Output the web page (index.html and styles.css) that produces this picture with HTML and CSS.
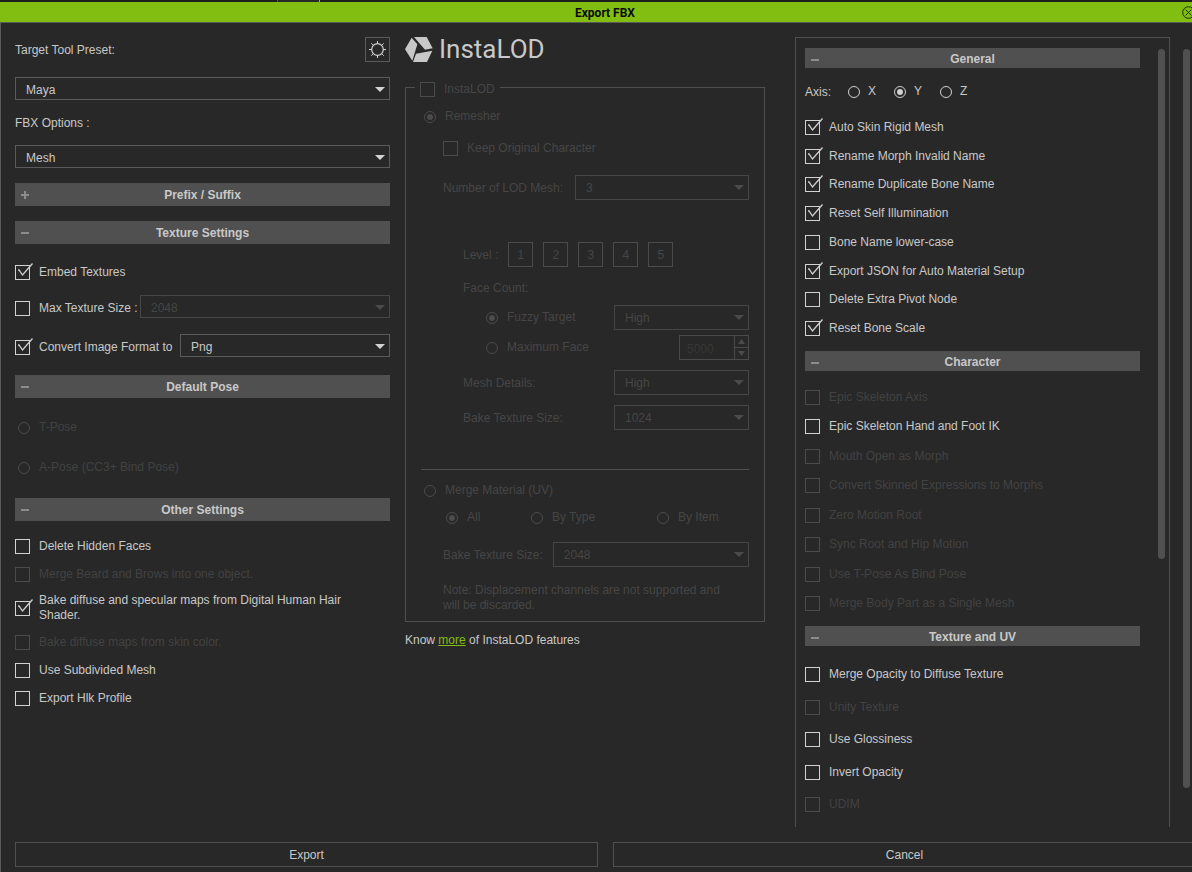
FILE: index.html
```html
<!DOCTYPE html>
<html lang="en">
<head>
<meta charset="utf-8">
<title>Export FBX</title>
<link rel="stylesheet" href="styles.css">
</head>
<body>
<div class="backdrop"><span class="backdrop-tab"></span></div>
<header class="titlebar">
  <h1 class="title">Export FBX</h1>
  <button class="close" aria-label="Close">
    <svg width="13" height="13" viewBox="0 0 13 13" fill="none" stroke="#1c2a04"><circle cx="6.5" cy="6.5" r="5.8"/><path d="M3.6 3.6l5.8 5.8M9.400 3.600l-5.800 5.800"/></svg>
  </button>
</header>

<form class="dialog">
  <div class="main">
    <section class="col-left">
      <div class="preset-row">
        <label for="preset">Target Tool Preset:</label>
        <button type="button" class="icon-btn" aria-label="Preset settings">
          <svg width="19" height="19" viewBox="0 0 19 19" fill="none" stroke="#d2d2d2"><circle cx="9.500" cy="9.500" r="5.800" stroke-width="1.200"/><path d="M9.500 1v2.700M9.500 15.300V18M1 9.500h2.700M15.300 9.500H18M3.300 3.300l2.200 2.200M13.500 13.500l2.200 2.200M3.300 15.700l2.200-2.200M13.500 5.500l2.200-2.200"/></svg>
        </button>
      </div>
      <select id="preset" class="select"><option>Maya</option></select>
      <label for="fbx" class="fbx-label">FBX Options :</label>
      <select id="fbx" class="select"><option>Mesh</option></select>

      <button type="button" class="bar"><svg class="bar-icon" width="8" height="10" viewBox="0 0 8 10"><path d="M0 4h8v2H0zM3 1h2v8H3z" fill="#8c8c8c"/></svg><span>Prefix / Suffix</span></button>
      <button type="button" class="bar"><svg class="bar-icon" width="8" height="10" viewBox="0 0 8 10"><path d="M0 4h8v2H0z" fill="#8c8c8c"/></svg><span>Texture Settings</span></button>
      <div class="texture-list">
        <label class="opt"><input type="checkbox" class="check" checked><span>Embed Textures</span></label>
        <div class="field-row max-size">
          <label class="opt"><input type="checkbox" class="check"><span>Max Texture Size :</span></label>
          <select class="select" aria-label="Max texture size" disabled><option>2048</option></select>
        </div>
        <div class="field-row convert">
          <label class="opt"><input type="checkbox" class="check" checked><span>Convert Image Format to</span></label>
          <select class="select" aria-label="Image format"><option>Png</option></select>
        </div>
      </div>

      <button type="button" class="bar"><svg class="bar-icon" width="8" height="10" viewBox="0 0 8 10"><path d="M0 4h8v2H0z" fill="#8c8c8c"/></svg><span>Default Pose</span></button>
      <div class="pose-list">
        <label class="opt off"><input type="radio" class="radio" name="pose" disabled><span>T-Pose</span></label>
        <label class="opt off"><input type="radio" class="radio" name="pose" disabled><span>A-Pose (CC3+ Bind Pose)</span></label>
      </div>

      <button type="button" class="bar"><svg class="bar-icon" width="8" height="10" viewBox="0 0 8 10"><path d="M0 4h8v2H0z" fill="#8c8c8c"/></svg><span>Other Settings</span></button>
      <div class="other-list">
        <label class="opt"><input type="checkbox" class="check"><span>Delete Hidden Faces</span></label>
        <label class="opt off"><input type="checkbox" class="check" disabled><span>Merge Beard and Brows into one object.</span></label>
        <label class="opt opt-tall"><input type="checkbox" class="check" checked><span>Bake diffuse and specular maps from Digital Human Hair Shader.</span></label>
        <label class="opt off"><input type="checkbox" class="check" disabled><span>Bake diffuse maps from skin color.</span></label>
        <label class="opt"><input type="checkbox" class="check"><span>Use Subdivided Mesh</span></label>
        <label class="opt"><input type="checkbox" class="check"><span>Export Hlk Profile</span></label>
      </div>
    </section>

    <section class="col-mid">
      <div class="logo">
        <svg width="28" height="25" viewBox="0 0 84 75" fill="#c8c8c8"><path d="M27 0H65L83 34 60 38z"/><path d="M82 41L66 75H24L33 50z"/><path d="M20 2L37 22 22 71 0 37z"/></svg>
        <span>InstaLOD</span>
      </div>
      <fieldset class="lod">
        <legend class="lod-legend"><label class="opt"><input type="checkbox" class="check" disabled><span>InstaLOD</span></label></legend>
        <label class="opt"><input type="radio" class="radio" name="mode" checked disabled><span>Remesher</span></label>
        <div class="group">
          <label class="opt keep"><input type="checkbox" class="check" disabled><span>Keep Original Character</span></label>
          <div class="field-row lod-count">
            <label class="caption" for="lods">Number of LOD Mesh:</label>
            <select id="lods" class="select tall" disabled><option>3</option></select>
          </div>
          <div class="levels">
            <div class="level-row">
              <span class="caption">Level :</span>
              <button type="button" class="level" disabled>1</button>
              <button type="button" class="level" disabled>2</button>
              <button type="button" class="level" disabled>3</button>
              <button type="button" class="level" disabled>4</button>
              <button type="button" class="level" disabled>5</button>
            </div>
            <p class="face-title">Face Count:</p>
            <div class="split face">
              <label class="opt"><input type="radio" class="radio" name="face" checked disabled><span>Fuzzy Target</span></label>
              <select class="select tall medium" aria-label="Fuzzy target" disabled><option>High</option></select>
            </div>
            <div class="split face max-face">
              <label class="opt"><input type="radio" class="radio" name="face" disabled><span>Maximum Face</span></label>
              <div class="spin">
                <input type="text" value="5000" aria-label="Maximum face" disabled>
                <div class="spin-btns">
                  <button type="button" aria-label="Increase" disabled><svg width="7" height="5" viewBox="0 0 7 5"><path d="M3.500 0L7 5H0z" fill="#4b4b4b"/></svg></button>
                  <button type="button" aria-label="Decrease" disabled><svg width="7" height="5" viewBox="0 0 7 5"><path d="M3.500 5L7 0H0z" fill="#4b4b4b"/></svg></button>
                </div>
              </div>
            </div>
            <div class="split detail">
              <label class="caption" for="details">Mesh Details:</label>
              <select id="details" class="select tall medium" disabled><option>High</option></select>
            </div>
            <div class="split detail">
              <label class="caption" for="bake1">Bake Texture Size:</label>
              <select id="bake1" class="select tall medium" disabled><option>1024</option></select>
            </div>
          </div>
        </div>
        <hr class="divider">
        <label class="opt"><input type="radio" class="radio" name="mode" disabled><span>Merge Material (UV)</span></label>
        <div class="group">
          <div class="merge-kinds">
            <label class="opt"><input type="radio" class="radio" name="kind" checked disabled><span>All</span></label>
            <label class="opt"><input type="radio" class="radio" name="kind" disabled><span>By Type</span></label>
            <label class="opt"><input type="radio" class="radio" name="kind" disabled><span>By Item</span></label>
          </div>
          <div class="field-row merge-size">
            <label class="caption" for="bake2">Bake Texture Size:</label>
            <select id="bake2" class="select tall" disabled><option>2048</option></select>
          </div>
          <p class="note">Note: Displacement channels are not supported and will be discarded.</p>
        </div>
      </fieldset>
      <p class="know">Know <a href="#">more</a> of InstaLOD features</p>
    </section>

    <section class="col-right">
      <div class="panel">
        <button type="button" class="bar slim"><svg class="bar-icon" width="8" height="10" viewBox="0 0 8 10"><path d="M0 6h8v2H0z" fill="#8c8c8c"/></svg><span>General</span></button>
        <div class="axis">
          <span class="axis-label">Axis:</span>
          <label class="opt"><input type="radio" class="radio" name="axis"><span>X</span></label>
          <label class="opt"><input type="radio" class="radio" name="axis" checked><span>Y</span></label>
          <label class="opt"><input type="radio" class="radio" name="axis"><span>Z</span></label>
        </div>
        <div class="list general">
          <label class="opt"><input type="checkbox" class="check" checked><span>Auto Skin Rigid Mesh</span></label>
          <label class="opt"><input type="checkbox" class="check" checked><span>Rename Morph Invalid Name</span></label>
          <label class="opt"><input type="checkbox" class="check" checked><span>Rename Duplicate Bone Name</span></label>
          <label class="opt"><input type="checkbox" class="check" checked><span>Reset Self Illumination</span></label>
          <label class="opt"><input type="checkbox" class="check"><span>Bone Name lower-case</span></label>
          <label class="opt"><input type="checkbox" class="check" checked><span>Export JSON for Auto Material Setup</span></label>
          <label class="opt"><input type="checkbox" class="check"><span>Delete Extra Pivot Node</span></label>
          <label class="opt"><input type="checkbox" class="check" checked><span>Reset Bone Scale</span></label>
        </div>
        <button type="button" class="bar slim"><svg class="bar-icon" width="8" height="10" viewBox="0 0 8 10"><path d="M0 6h8v2H0z" fill="#8c8c8c"/></svg><span>Character</span></button>
        <div class="list character">
          <label class="opt off"><input type="checkbox" class="check" disabled><span>Epic Skeleton Axis</span></label>
          <label class="opt"><input type="checkbox" class="check"><span>Epic Skeleton Hand and Foot IK</span></label>
          <label class="opt off"><input type="checkbox" class="check" disabled><span>Mouth Open as Morph</span></label>
          <label class="opt off"><input type="checkbox" class="check" disabled><span>Convert Skinned Expressions to Morphs</span></label>
          <label class="opt off"><input type="checkbox" class="check" disabled><span>Zero Motion Root</span></label>
          <label class="opt off"><input type="checkbox" class="check" disabled><span>Sync Root and Hip Motion</span></label>
          <label class="opt off"><input type="checkbox" class="check" disabled><span>Use T-Pose As Bind Pose</span></label>
          <label class="opt off"><input type="checkbox" class="check" disabled><span>Merge Body Part as a Single Mesh</span></label>
        </div>
        <button type="button" class="bar slim"><svg class="bar-icon" width="8" height="10" viewBox="0 0 8 10"><path d="M0 6h8v2H0z" fill="#8c8c8c"/></svg><span>Texture and UV</span></button>
        <div class="list texture">
          <label class="opt"><input type="checkbox" class="check"><span>Merge Opacity to Diffuse Texture</span></label>
          <label class="opt off"><input type="checkbox" class="check" disabled><span>Unity Texture</span></label>
          <label class="opt"><input type="checkbox" class="check"><span>Use Glossiness</span></label>
          <label class="opt"><input type="checkbox" class="check"><span>Invert Opacity</span></label>
          <label class="opt off"><input type="checkbox" class="check" disabled><span>UDIM</span></label>
        </div>
      </div>
      <div class="track"><div class="thumb panel-thumb"></div></div>
    </section>

    <div class="outer-track"><div class="thumb outer-thumb"></div></div>
  </div>

  <footer class="actions">
    <button type="button" class="action">Export</button>
    <button type="button" class="action">Cancel</button>
  </footer>
</form>
</body>
</html>
```
FILE: styles.css
```css
* { box-sizing: border-box; }

body {
  margin: 0;
  min-height: 100vh;
  display: flex;
  flex-direction: column;
  overflow: hidden;
  background: #282828;
  color: #c8c8c8;
  font: 12px/15px "Liberation Sans", Arial, sans-serif;
}

button, input, select {
  margin: 0;
  font: inherit;
  color: inherit;
  border-radius: 0;
}
button { padding: 0; background: none; border: 0; }
svg { display: block; }
p, h1 { margin: 0; }

/* Strip of the window behind, and the title bar */
.backdrop { height: 2px; padding-left: 277px; background: #1e1e1e; }
.backdrop-tab {
  display: block;
  width: 43px;
  height: 2px;
  border-left: 1px solid #505050;
  border-right: 1px solid #a0a0a0;
  background: #282828;
}
.titlebar {
  display: grid;
  grid-template-columns: 1fr auto 1fr;
  align-items: center;
  height: 21px;
  margin-right: -18px;
  background: #81be11;
  border-bottom: 1px solid #5a5a5a;
  color: #0a0a0a;
}
.title { grid-column: 2; padding-top: 1px; font: 700 12px/20px Roboto, "Liberation Sans", sans-serif; }
.close { justify-self: end; margin-right: 15px; }

.dialog {
  flex: 1;
  display: flex;
  flex-direction: column;
  padding: 14px 0 5px 14px;
  border-left: 1px solid #5a5a5a;
}

/* Three columns, their gutters, and the outer scroll bar */
.main {
  flex: 1;
  display: grid;
  grid-template-columns: minmax(0, 375fr) 15px minmax(0, 360fr) 30px minmax(0, 375fr) 13px 7px;
  padding-right: 2px;
}
.col-left { grid-column: 1; display: flex; flex-direction: column; }
.col-mid { grid-column: 3; }
.col-right {
  grid-column: 5;
  display: flex;
  border: 1px solid #505050;
  border-bottom: 0;
  padding: 10px 4px 0 9px;
}
.outer-track { grid-column: 7; padding-top: 12px; }

/* Options */
.opt { display: flex; align-items: center; }
.off { color: #424242; }

.check, .radio { appearance: none; flex: none; position: relative; border: 1px solid #d2d2d2; }
.check { width: 15px; height: 15px; margin-right: 9px; }
.check:checked::after {
  content: "";
  position: absolute;
  left: -1px;
  top: -3px;
  width: 18px;
  height: 17px;
  background: url("data:image/svg+xml,%3Csvg xmlns='http://www.w3.org/2000/svg' width='18' height='17' fill='none' stroke='%23d2d2d2' stroke-width='1.3'%3E%3Cpath d='M3 7h1l3.500 5L17.500 .5'/%3E%3C/svg%3E");
}
.radio {
  width: 12px;
  height: 12px;
  margin: 1px 9px 0 3px;
  border-radius: 50%;
}
.radio:checked::after {
  content: "";
  position: absolute;
  inset: 2px;
  border-radius: 50%;
  background: #d2d2d2;
}
.check:disabled, .radio:disabled { border-color: #4b4b4b; }
.radio:disabled::after { background: #4b4b4b; }

.select {
  appearance: none;
  width: 100%;
  min-width: 0;
  height: 23px;
  padding: 3px 20px 0 10px;
  border: 1px solid #5a5a5a;
  background: #282828 url("data:image/svg+xml,%3Csvg xmlns='http://www.w3.org/2000/svg' width='10' height='5'%3E%3Cpath d='M0 0h10L5 5z' fill='%23d2d2d2'/%3E%3C/svg%3E") no-repeat right 4px top 9px;
}
.select:disabled {
  opacity: 1;
  color: #464646;
  border-color: #464646;
  background-image: url("data:image/svg+xml,%3Csvg xmlns='http://www.w3.org/2000/svg' width='10' height='5'%3E%3Cpath d='M0 0h10L5 5z' fill='%234b4b4b'/%3E%3C/svg%3E");
}
.select.tall { height: 25px; padding-top: 2px; }

.bar {
  display: grid;
  grid-template-columns: 1fr auto 1fr;
  align-items: center;
  flex: none;
  height: 23px;
  padding: 0 6px;
  background: #505050;
  font-weight: 700;
}
.bar span { padding-top: 2px; }
.bar.slim { height: 20px; }

.field-row { display: flex; align-items: center; }
.field-row > label { flex: none; }
.field-row > .select { flex: 1; }
.caption { padding-top: 2px; }

/* Left column */
.preset-row { display: flex; justify-content: space-between; align-items: center; margin-bottom: 15px; }
.preset-row label { padding-top: 2px; }
.icon-btn { display: grid; place-items: center; width: 25px; height: 25px; border: 1px solid #5a5a5a; }
.fbx-label { margin: 16px 0 14px; }
.col-left > .bar { margin-top: 15px; }
.texture-list { display: flex; flex-direction: column; gap: 15px; margin-top: 21px; }
.texture-list .field-row > .opt { padding-top: 4px; }
.max-size > label { width: 125px; }
.convert { margin-top: 1px; }
.convert > label { width: 165px; }
.col-left > .texture-list + .bar { margin-top: 18px; }
.pose-list { display: flex; flex-direction: column; gap: 25px; padding: 22px 0 8px; }
.other-list { display: flex; flex-direction: column; gap: 13px; margin-top: 18px; }
.opt-tall { margin: -2px 0 -1px; padding-right: 15px; }
.opt-tall .check { margin-top: 1px; }

/* InstaLOD column */
.logo {
  display: flex;
  align-items: center;
  gap: 6px;
  height: 25px;
  font: 400 26px/25px Roboto, "Liberation Sans", sans-serif;
}
.lod {
  min-width: 0;
  margin: 16px 0 0;
  padding: 12px 15px 8px;
  border: 1px solid #505050;
  color: #464646;
}
.lod-legend { margin-left: -6px; padding: 4px 5px 0; }
.group { padding-left: 22px; }
.keep { margin: 17px 0 19px; }
.lod-count { gap: 12px; }
.merge-size { gap: 10px; }
.levels { padding: 42px 0 0 20px; }
.level-row { display: flex; align-items: center; gap: 10px; }
.level { width: 25px; height: 25px; padding-top: 1px; border: 1px solid #4b4b4b; }
.face-title { margin: 14px 0 9px; }
.split { display: flex; align-items: center; justify-content: space-between; }
.face { padding-left: 20px; }
.select.medium { width: 135px; }
.max-face { margin-top: 5px; }
.spin { display: flex; width: 70px; height: 25px; border: 1px solid #4b4b4b; }
.spin input {
  flex: 1;
  width: 0;
  min-width: 0;
  padding: 3px 0 0 7px;
  border: 0;
  background: none;
  color: #373737;
}
.spin-btns { display: flex; flex-direction: column; width: 14px; border-left: 1px solid #4b4b4b; }
.spin-btns button { flex: 1; display: grid; place-items: center; }
.spin-btns button + button { border-top: 1px solid #4b4b4b; }
.detail { margin-top: 10px; }
.divider { height: 1px; margin: 39px 0 13px; border: 0; background: #505050; }
.merge-kinds { display: grid; grid-template-columns: 85px 126px 1fr; margin: 12px 0 17px; }
.note { margin-top: 16px; padding-right: 15px; }
.know { margin-top: 11px; }
.know a { color: #81be11; }

/* Right column */
.panel { flex: 1; display: flex; flex-direction: column; }
.axis { display: flex; align-items: center; gap: 14px; margin: 15px 0 20px; }
.axis-label { width: 26px; margin-top: 2px; }
.axis .radio { margin-right: 8px; }
.axis .opt > span { width: 9px; }
.list { display: flex; flex-direction: column; justify-content: space-between; }
.general { min-height: 216px; margin-bottom: 15px; }
.character { min-height: 221px; margin: 19px 0 15px; }
.texture { min-height: 145px; margin-top: 21px; }
.track { width: 7px; margin-left: 18px; padding-top: 1px; }
.thumb { border-radius: 4px; background: #505050; }
.panel-thumb { height: 65.5%; }
.outer-thumb { height: 95%; }

.actions {
  display: grid;
  grid-template-columns: 1fr 1fr;
  gap: 15px;
  margin: 15px -4px 0 0;
}
.action { height: 25px; padding-top: 2px; border: 1px solid #505050; }
```
